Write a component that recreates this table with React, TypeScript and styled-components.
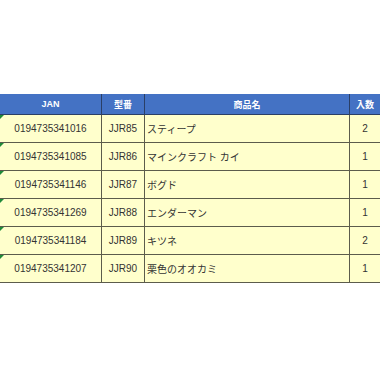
import styled, { createGlobalStyle } from "styled-components";

const GlobalStyle = createGlobalStyle`
  html, body {
    margin: 0;
    padding: 0;
    background: #ffffff;
  }
  body {
    font-family: "Liberation Sans", "Noto Sans CJK JP", sans-serif;
  }
  * {
    box-sizing: border-box;
  }
`;

const Page = styled.div`
  width: 380px;
  height: 380px;
  padding-top: 94px;
  overflow: hidden;
`;

const Grid = styled.div`
  display: flex;
  flex-direction: column;
  width: 380px;
`;

const Row = styled.div<{ $head?: boolean }>`
  display: grid;
  grid-template-columns: 101px 43px 205px 1fr;
  height: ${(p) => (p.$head ? "21px" : "28px")};
  background: ${(p) => (p.$head ? "#4472c4" : "#ffffcc")};
  border-bottom: 1px solid ${(p) => (p.$head ? "#2a3f66" : "#5c5c4c")};
`;

const HeadCell = styled.div<{ $first?: boolean }>`
  display: flex;
  align-items: center;
  justify-content: center;
  color: #ffffff;
  font-weight: bold;
  font-size: 9px;
  font-family: "Liberation Sans", "Noto Sans CJK JP", sans-serif;
  border-left: ${(p) => (p.$first ? "none" : "1px solid #2a3f66")};
`;

const Cell = styled.div<{ $align?: "left" | "center"; $first?: boolean; $flag?: boolean }>`
  position: relative;
  display: flex;
  align-items: center;
  justify-content: ${(p) => (p.$align === "left" ? "flex-start" : "center")};
  padding-left: ${(p) => (p.$align === "left" ? "2px" : "0")};
  color: #333333;
  font-size: 10px;
  font-family: "Liberation Sans", "Noto Sans CJK JP", sans-serif;
  border-left: ${(p) => (p.$first ? "none" : "1px solid #5c5c4c")};
  white-space: nowrap;

  ${(p) =>
    p.$flag &&
    `
    &::before {
      content: "";
      position: absolute;
      left: 0;
      top: 0;
      width: 0;
      height: 0;
      border-top: 4px solid #1f8a3a;
      border-right: 4px solid transparent;
    }
  `}
`;

const items = [
  { jan: "0194735341016", model: "JJR85", name: "スティープ", qty: 2 },
  { jan: "0194735341085", model: "JJR86", name: "マインクラフト カイ", qty: 1 },
  { jan: "0194735341146", model: "JJR87", name: "ボグド", qty: 1 },
  { jan: "0194735341269", model: "JJR88", name: "エンダーマン", qty: 1 },
  { jan: "0194735341184", model: "JJR89", name: "キツネ", qty: 2 },
  { jan: "0194735341207", model: "JJR90", name: "栗色のオオカミ", qty: 1 },
];

export default function App() {
  return (
    <>
      <GlobalStyle />
      <Page>
        <Grid>
          <Row $head>
            <HeadCell $first>JAN</HeadCell>
            <HeadCell>型番</HeadCell>
            <HeadCell>商品名</HeadCell>
            <HeadCell>入数</HeadCell>
          </Row>
          {items.map((it) => (
            <Row key={it.jan}>
              <Cell $first $flag>{it.jan}</Cell>
              <Cell>{it.model}</Cell>
              <Cell $align="left">{it.name}</Cell>
              <Cell>{it.qty}</Cell>
            </Row>
          ))}
        </Grid>
      </Page>
    </>
  );
}
